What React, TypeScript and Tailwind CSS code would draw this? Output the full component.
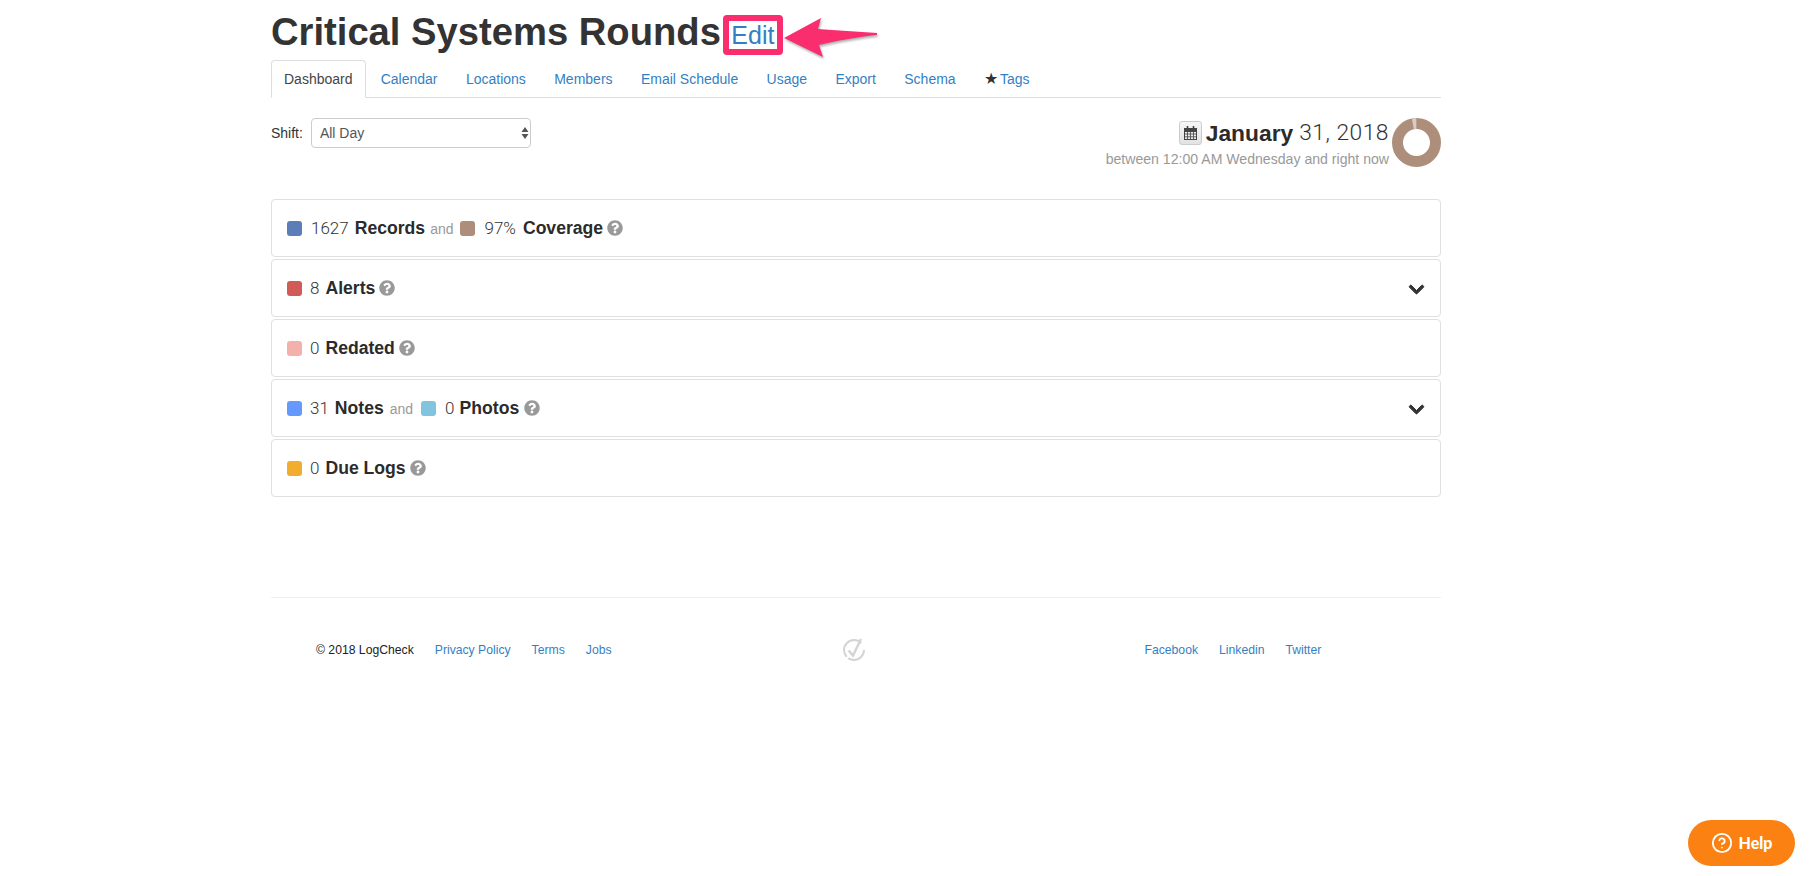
import { FaChevronDown, FaQuestionCircle } from 'react-icons/fa'
import { CircleHelp } from 'lucide-react'

const tabs = ['Calendar', 'Locations', 'Members', 'Email Schedule', 'Usage', 'Export', 'Schema']

function Swatch({ color }: { color: string }) {
  return <span className={`w-[15px] h-[15px] rounded-[3px] shrink-0 ${color}`} />
}

function Num({ children }: { children: string }) {
  return <span className="font-['Roboto'] text-[17px] font-light text-[#333]">{children}</span>
}

function Label({ children }: { children: string }) {
  return <b className="font-bold text-[#2b2b2b]">{children}</b>
}

function Hint() {
  return <FaQuestionCircle className="text-[#999] w-[16px] h-[16px] shrink-0" />
}

function And() {
  return <span className="text-[14px] text-[#999] mt-[2px]">and</span>
}

function Row({ children, open }: { children: React.ReactNode; open?: boolean }) {
  return (
    <div className="h-[58px] mb-[2px] pl-[15px] pr-[15px] border border-[#e0e0e0] rounded-[4px] flex items-center justify-between">
      <div className="flex items-center text-[17.6px]">{children}</div>
      {open && <FaChevronDown className="text-[#333] w-[17px] h-[17px] mt-[3px]" stroke="currentColor" strokeWidth={30} />}
    </div>
  )
}

function Donut() {
  return (
    <svg width="49" height="49" viewBox="0 0 49 49" className="shrink-0">
      <circle cx="24.5" cy="24.5" r="19" fill="none" stroke="#ad8e7b" strokeWidth="11" />
      <circle cx="24.5" cy="24.5" r="19" fill="none" stroke="#d8ccc4" strokeWidth="11" pathLength="100" strokeDasharray="3 97" transform="rotate(-101 24.5 24.5)" />
    </svg>
  )
}

function CalendarGlyph() {
  return (
    <svg width="15" height="16" viewBox="0 0 15 16" fill="none" stroke="#444">
      <rect x="1.5" y="3.5" width="12" height="11" />
      <path d="M1.5 3.5 H13.5 V6.5 H1.5 Z" fill="#444" />
      <path d="M1.5 9 H13.5 M1.5 11.8 H13.5 M4.5 6.5 V14.5 M7.5 6.5 V14.5 M10.5 6.5 V14.5" strokeWidth="0.8" />
      <path d="M4.5 1 V4 M10.5 1 V4" strokeWidth="1.6" />
    </svg>
  )
}

export default function App() {
  return (
    <div className="font-['Liberation_Sans',Arial,sans-serif] text-[#333] min-h-[876px] bg-white">
      <div className="w-[1170px] ml-[271px] relative">
        <div className="h-[60px] pt-[10px] flex items-start">
          <h1 className="text-[38.2px] leading-[44px] font-bold text-[#333]">Critical Systems Rounds</h1>
          <a className="ml-[2px] mt-[5px] w-[60px] h-[40px] border-[6px] border-[#fa2e6e] rounded-[4px] text-[25px] leading-[28px] text-center text-[#337fc4]">Edit</a>
        </div>

        {/* arrow from the annotation layer */}
        <svg width="100" height="50" viewBox="0 0 100 50" className="absolute left-[513px] top-[15px] drop-shadow-[1px_2px_1px_rgba(0,0,0,0.3)]">
          <path d="M0 23 L37 3 L34 14 C52 15 74 17 93 18 L93 20 C74 22 52 26 35 30 L39 42 Z" fill="#fa2e6e" />
        </svg>

        <div className="h-[38px] border-b border-[#ddd] flex text-[14px]">
          <div className="h-[38px] mr-[1px] px-[12px] pt-[1px] border border-[#ddd] border-b-white rounded-t-[4px] flex items-center text-[#444] bg-white">Dashboard</div>
          {tabs.map(t => (
            <a key={t} className="h-[37px] pt-[1px] px-[14.2px] flex items-center text-[#337fc4]">{t}</a>
          ))}
          <a className="h-[37px] pt-[1px] px-[14.2px] flex items-center text-[#337fc4]"><span className="text-[#333] text-[16px] mr-[2px]">★</span>Tags</a>
        </div>

        <div className="h-[101px] pt-[20px] flex justify-between items-start">
          <div className="flex items-center text-[14px] h-[30px]">
            <span>Shift:</span>
            <div className="relative ml-[8px]">
              <select className="appearance-none w-[220px] h-[30px] pl-[8px] border border-[#ccc] rounded-[4px] text-[14px] text-[#555] bg-white">
                <option>All Day</option>
              </select>
              <svg width="8" height="14" viewBox="0 0 8 14" className="absolute right-[2px] top-[8px] pointer-events-none">
                <path d="M4 1 L7.5 6 H0.5 Z M4 13 L7.5 8 H0.5 Z" fill="#555" />
              </svg>
            </div>
          </div>
          <div className="flex items-start">
            <div className="flex flex-col items-end">
              <div className="flex items-center h-[28px] text-[22.8px] mt-[1px]">
                <span className="w-[23px] h-[24px] mr-[4px] bg-gradient-to-b from-[#f7f7f7] to-[#e2e2e2] border border-[#ccc] rounded-[3px] flex items-center justify-center">
                  <CalendarGlyph />
                </span>
                <b className="font-bold text-[#2b2b2b]">January</b>
                <span className="font-['Roboto'] font-light ml-[6px] tracking-[0.5px] text-[#333]">31, 2018</span>
              </div>
              <div className="text-[14.1px] text-[#999] mt-[2px]">between 12:00 AM Wednesday and right now</div>
            </div>
            <div className="ml-[3px]"><Donut /></div>
          </div>
        </div>

        <Row>
          <Swatch color="bg-[#5b7db8]" />
          <span className="ml-[9px]"><Num>1627</Num></span>
          <span className="ml-[6px]"><Label>Records</Label></span>
          <span className="ml-[5px] flex"><And /></span>
          <span className="ml-[7px] flex"><Swatch color="bg-[#ad8e7b]" /></span>
          <span className="ml-[9px]"><Num>97%</Num></span>
          <span className="ml-[7px]"><Label>Coverage</Label></span>
          <span className="ml-[4px] flex"><Hint /></span>
        </Row>
        <Row open>
          <Swatch color="bg-[#d15b56]" />
          <span className="ml-[8px]"><Num>8</Num></span>
          <span className="ml-[6px]"><Label>Alerts</Label></span>
          <span className="ml-[4px] flex"><Hint /></span>
        </Row>
        <Row>
          <Swatch color="bg-[#f4b0aa]" />
          <span className="ml-[8px]"><Num>0</Num></span>
          <span className="ml-[6px]"><Label>Redated</Label></span>
          <span className="ml-[4px] flex"><Hint /></span>
        </Row>
        <Row open>
          <Swatch color="bg-[#6699ff]" />
          <span className="ml-[8px]"><Num>31</Num></span>
          <span className="ml-[6px]"><Label>Notes</Label></span>
          <span className="ml-[6px] flex"><And /></span>
          <span className="ml-[8px] flex"><Swatch color="bg-[#80c4e0]" /></span>
          <span className="ml-[9px]"><Num>0</Num></span>
          <span className="ml-[5px]"><Label>Photos</Label></span>
          <span className="ml-[5px] flex"><Hint /></span>
        </Row>
        <Row>
          <Swatch color="bg-[#f0ad2e]" />
          <span className="ml-[8px]"><Num>0</Num></span>
          <span className="ml-[6px]"><Label>Due Logs</Label></span>
          <span className="ml-[4px] flex"><Hint /></span>
        </Row>

        <div className="mt-[100px] border-t border-[#eee] pt-[45px] pl-[45px] flex items-center text-[12.2px] h-[60px]">
          <div className="w-[526px] flex items-center gap-[21px]">
            <span className="text-[#222]">© 2018 LogCheck</span>
            <a className="text-[#337fc4]">Privacy Policy</a>
            <a className="text-[#337fc4]">Terms</a>
            <a className="text-[#337fc4]">Jobs</a>
          </div>
          <svg width="24" height="26" viewBox="0 0 24 26" fill="none" stroke="#d4d4d4" strokeWidth="2">
            <circle cx="12" cy="13" r="10" pathLength="100" strokeDasharray="35 3 50 12" />
            <path d="M6.5 13.5 L11 18.5 L19 2" strokeWidth="2.4" />
          </svg>
          <div className="ml-[278.5px] flex items-center gap-[21px]">
            <a className="text-[#337fc4]">Facebook</a>
            <a className="text-[#337fc4]">Linkedin</a>
            <a className="text-[#337fc4]">Twitter</a>
          </div>
        </div>
      </div>

      <div className="fixed left-[1688px] top-[820px] w-[107px] h-[46px] rounded-full bg-[#fb8212] text-white flex items-center justify-center gap-[6px] font-['Lato'] font-black text-[16px]">
        <CircleHelp className="w-[22px] h-[22px]" strokeWidth={2} />
        Help
      </div>
    </div>
  )
}
